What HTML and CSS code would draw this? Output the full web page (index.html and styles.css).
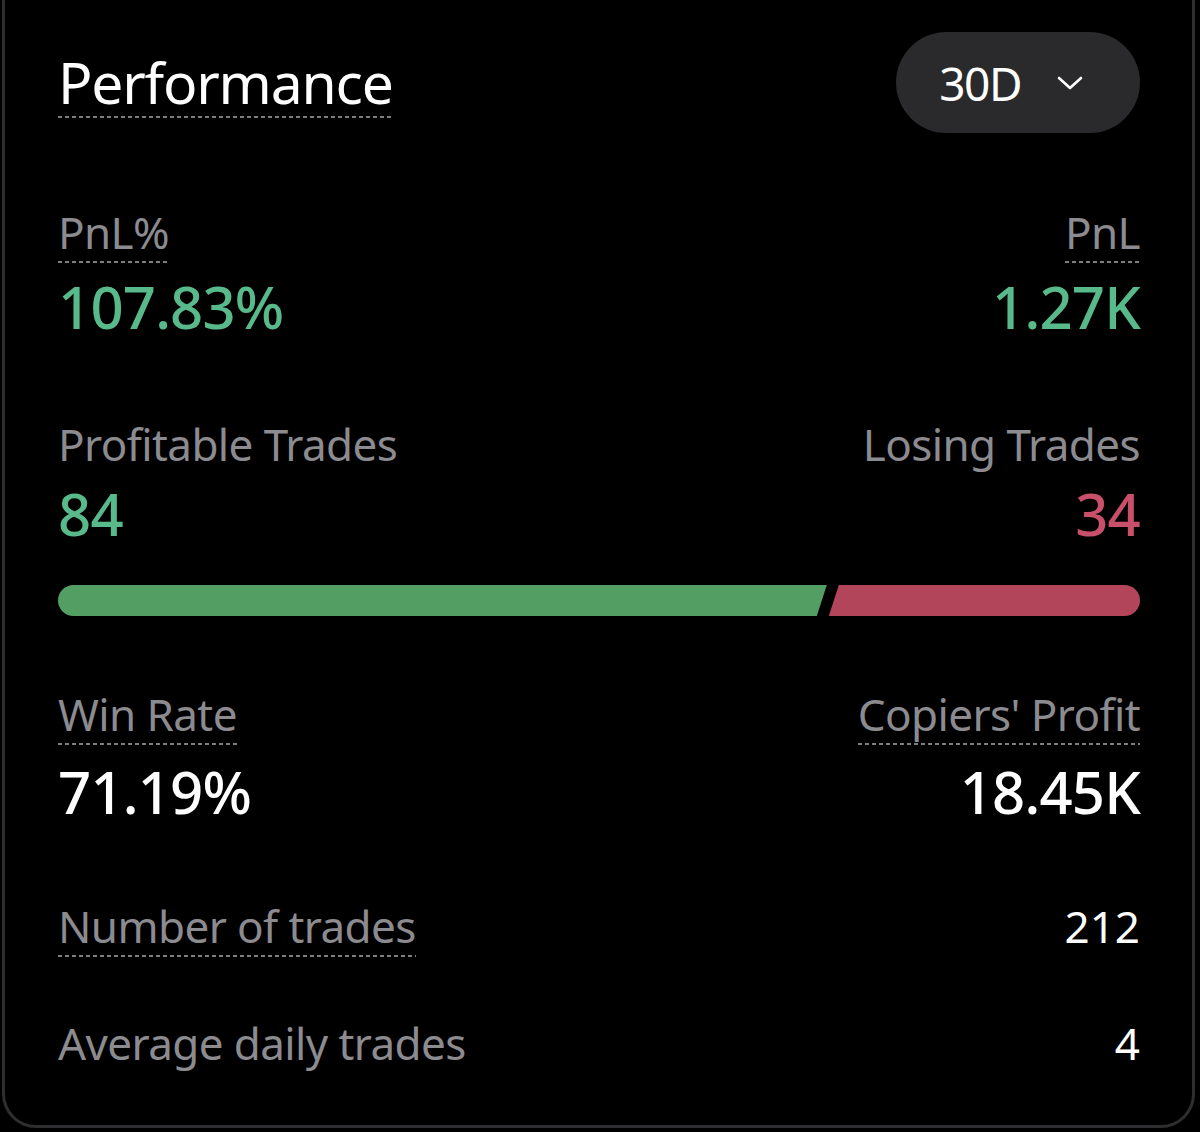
FILE: index.html
```html
<!DOCTYPE html>
<html>
  <head>
    <title>Performance</title>
    <link rel="stylesheet" href="styles.css">
  </head>
  <body>
    <div class="card">
      <div class="card-header">
        <h1 class="title dotted">Performance</h1>
        <button class="period">
          <span>30D</span>
          <svg width="26" height="16" viewBox="0 0 26 16">
            <path d="M2 3 L13 13 L24 3" fill="none" stroke="#fff" stroke-width="2.6" stroke-linecap="round" stroke-linejoin="round" />
          </svg>
        </button>
      </div>

      <div class="stat-row first">
        <div class="stat">
          <span class="label dotted">PnL%</span>
          <span class="value up">107.83%</span>
        </div>
        <div class="stat right">
          <span class="label dotted">PnL</span>
          <span class="value up">1.27K</span>
        </div>
      </div>

      <div class="stat-row trades">
        <div class="stat">
          <span class="label">Profitable Trades</span>
          <span class="value up">84</span>
        </div>
        <div class="stat right">
          <span class="label">Losing Trades</span>
          <span class="value down">34</span>
        </div>
      </div>

      <div class="ratio-bar">
        <div class="bar-win" style="flex-grow: 84"></div>
        <div class="bar-loss" style="flex-grow: 34"></div>
      </div>

      <div class="stat-row after-bar">
        <div class="stat">
          <span class="label dotted">Win Rate</span>
          <span class="value">71.19%</span>
        </div>
        <div class="stat right">
          <span class="label dotted">Copiers' Profit</span>
          <span class="value">18.45K</span>
        </div>
      </div>

      <div class="line-item first-line">
        <span class="label dotted">Number of trades</span>
        <span class="line-value">212</span>
      </div>
      <div class="line-item">
        <span class="label">Average daily trades</span>
        <span class="line-value">4</span>
      </div>
    </div>
  </body>
</html>
```

FILE: styles.css
```css
body {
  margin: 0;
  padding: 0 5px 0 2px;
  background-color: #000;
  color: #fff;
  font-family: "Noto Sans", "Open Sans", sans-serif;
}

.card {
  height: 1128px;
  box-sizing: border-box;
  border: 3px solid #2e2e30;
  border-top: none;
  border-radius: 0 0 34px 34px;
  padding: 32px 52px 0 53px;
}

.card-header {
  display: flex;
  justify-content: space-between;
  align-items: center;
}

.dotted {
  padding-bottom: 5px;
  background-image: repeating-linear-gradient(
    to right,
    #7d7d82 0 4px,
    transparent 4px 7px
  );
  background-size: 100% 2px;
  background-position: bottom left;
  background-repeat: no-repeat;
}

.title {
  margin: 0;
  font-size: 57px;
  font-weight: 400;
  letter-spacing: -1.2px;
  line-height: 70px;
  padding-bottom: 1px;
}

.period {
  display: flex;
  align-items: center;
  gap: 36px;
  height: 101px;
  padding: 0 57px 0 43px;
  border: none;
  border-radius: 51px;
  background-color: #2a2a2c;
  color: #fff;
  font-family: inherit;
  font-size: 46px;
  letter-spacing: -1.5px;
  cursor: pointer;
}

.stat-row {
  display: flex;
  justify-content: space-between;
  margin-top: 73px;
}

.stat-row.trades {
  margin-top: 77px;
}

.stat {
  display: flex;
  flex-direction: column;
  align-items: flex-start;
  gap: 10px;
}

.stat.right {
  align-items: flex-end;
}

.label {
  display: inline-block;
  font-size: 44px;
  line-height: 52px;
  letter-spacing: -0.6px;
  color: #8b8b90;
}

.value {
  font-size: 58px;
  line-height: 68px;
  font-weight: 500;
  letter-spacing: -0.8px;
  color: #fff;
}

.value.up {
  color: #58b98b;
}

.value.down {
  color: #c9506a;
}

.ratio-bar {
  display: flex;
  gap: 2px;
  height: 31px;
  margin-top: 37px;
}

.bar-win {
  background-color: #529e63;
  border-radius: 16px 0 0 16px;
  clip-path: polygon(0 0, 100% 0, calc(100% - 10px) 100%, 0 100%);
}

.bar-loss {
  background-color: #b3455b;
  border-radius: 0 16px 16px 0;
  clip-path: polygon(10px 0, 100% 0, 100% 100%, 0 100%);
}

.stat-row.after-bar {
  margin-top: 72px;
}

.after-bar .stat {
  gap: 13px;
}

.line-item {
  display: flex;
  justify-content: space-between;
  align-items: flex-start;
  margin-top: 60px;
}

.line-item.first-line {
  margin-top: 74px;
}

.line-value {
  font-size: 44px;
  line-height: 52px;
  color: #fff;
}
```
